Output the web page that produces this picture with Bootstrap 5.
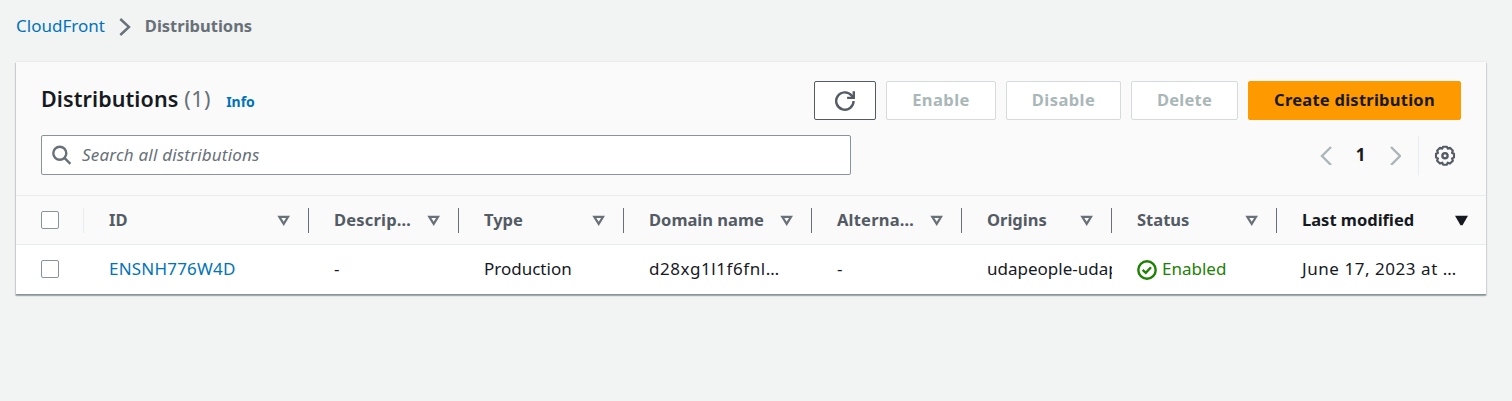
<!DOCTYPE html>
<html lang="en">
<head>
<meta charset="utf-8">
<meta name="viewport" content="width=device-width, initial-scale=1">
<title>CloudFront Distributions</title>
<link href="https://cdn.jsdelivr.net/npm/bootstrap@5.3.0/dist/css/bootstrap.min.css" rel="stylesheet">
<style>
body{background:#f2f3f3;color:#16191f;font-family:"Noto Sans","Open Sans",sans-serif;font-size:17px;line-height:24px;min-height:401px}
a{color:#0073bb;text-decoration:none}
svg{display:block;flex:none}
.crumbs{height:62px;padding:14px 16px 0}
.crumbs svg{margin:4px 13px 0}
.crumbs b,.btn,th{font-size:16.5px}
.crumbs b{color:#687078}
.panel{width:1470px;margin-left:16px;background:#fff;border-bottom:1px solid #879596;box-shadow:0 1px 1px 0 rgba(0,28,36,.1),1px 1px 1px 0 rgba(0,28,36,.12),-1px 1px 1px 0 rgba(0,28,36,.15),0 -1px 0 #eaeded}
.panel-top{height:134px;background:#fafafa;border-bottom:1px solid #eaeded;padding:19px 25px 0}
h2{font-size:21.5px;line-height:36px;font-weight:600;color:#16191f;letter-spacing:.1px}
.count{color:#687078;font-weight:400;letter-spacing:.6px}
.info{font-size:14px;font-weight:700;margin-left:15px;padding-top:9px}
.actions{gap:10px}
.btn{--bs-btn-border-radius:2px;--bs-btn-padding-y:0;--bs-btn-padding-x:0;--bs-btn-disabled-opacity:1;--bs-btn-bg:#fff;--bs-btn-disabled-bg:#fff;--bs-btn-disabled-color:#aab7b8;--bs-btn-disabled-border-color:#d5dbdb;height:39px;line-height:36px;padding-bottom:1px;font-weight:700;white-space:nowrap;letter-spacing:.25px}
.btn-reload{width:62px;--bs-btn-border-color:#545b64;color:#545b64;padding:0 20px}
.btn-enable{width:110px;letter-spacing:.45px}.btn-disable{width:115px;letter-spacing:.45px}.btn-delete{width:107px}
.btn-create{width:213px;--bs-btn-bg:#ff9900;--bs-btn-border-color:#ff9900;--bs-btn-color:#16191f}
.tools{margin-top:15px}
.filter{width:810px;height:40px;background:#fff;border:1px solid #879596;border-radius:2px;padding-left:10px;gap:10px;color:#687078;font-style:italic;letter-spacing:.2px}
.page-no{width:57px}
.rule{width:1px;height:39px;background:#eaeded;margin:0 16px 0 17px}
.gear{margin-right:5px;margin-left:-1px}
table{table-layout:fixed;width:1470px;border-collapse:separate;border-spacing:0}
th,td{height:49px;padding:0 0 0 25px;overflow:hidden;white-space:nowrap;vertical-align:middle}
td{padding-bottom:1px}
th{background:#fafafa;border-bottom:1px solid #eaeded;color:#545b64}
th .head{height:25px;border-right:1px solid #687078;padding-right:18px}
th:first-child .head{border-color:#eaeded}
th:last-child .head{border:0}
.tick{width:18px;height:18px;border:1px solid #879596;border-radius:2px;background:#fff}
.sorted{color:#16191f}
.ok{color:#1d8102;gap:5px}
.ok svg{margin-top:1px}
.track-1{letter-spacing:.2px}
.track-2{letter-spacing:.55px}
</style>
</head>
<body>
<nav class="crumbs d-flex align-items-start" aria-label="breadcrumb">
  <a href="#">CloudFront</a>
  <svg width="14" height="18" viewBox="0 0 14 18" fill="none" stroke="#687078" stroke-width="2.4"><path d="M2.3 1 11 9 2.3 17"/></svg>
  <b>Distributions</b>
</nav>
<main class="panel">
  <div class="panel-top">
    <div class="d-flex">
      <h2 class="mb-0">Distributions <span class="count">(1)</span></h2>
      <a class="info" href="#">Info</a>
      <div class="actions d-flex ms-auto">
        <button class="btn btn-reload" aria-label="Refresh"><svg width="20" height="20" viewBox="0 0 20 20" fill="none" stroke="currentColor" stroke-width="2.4"><path d="M18.6 10a8.7 8.7 0 1 1-2-5.5l2 2.3M18.8.2v6.7h-6.7"/></svg></button>
        <button class="btn btn-enable" disabled>Enable</button>
        <button class="btn btn-disable" disabled>Disable</button>
        <button class="btn btn-delete" disabled>Delete</button>
        <button class="btn btn-create">Create distribution</button>
      </div>
    </div>
    <div class="tools d-flex align-items-center">
      <div class="filter d-flex align-items-center">
        <svg width="20" height="20" viewBox="0 0 20 20" fill="none" stroke="#687078" stroke-width="2.4"><circle cx="7.8" cy="8.3" r="6.5"/><path d="m12.4 12.9 6 6"/></svg>
        <span>Search all distributions</span>
      </div>
      <div class="d-flex align-items-center ms-auto">
        <svg width="12" height="20" viewBox="0 0 12 20" fill="none" stroke="#aab7b8" stroke-width="2.4"><path d="m11 2-9 9 9 9"/></svg>
        <b class="page-no text-center">1</b>
        <svg width="12" height="20" viewBox="0 0 12 20" fill="none" stroke="#aab7b8" stroke-width="2.4"><path d="m2 2 9 9-9 9"/></svg>
        <div class="rule"></div>
        <svg class="gear" width="22" height="22" viewBox="-11 -11.7 22 22" fill="none" stroke="#545b64"><path stroke-width="2.1" stroke-linejoin="round" d="M-1.9-9h3.8l.8 2 2.3-.9 2.9 2.9-.9 2.3 2 .8v3.8l-2 .8.9 2.3L5 7.9 2.7 7l-.8 2h-3.8l-.8-2-2.3.9L-7.9 5-7 2.7l-2-.8v-3.8l2-.8L-7.9-5-5-7.9l2.3.9z"/><circle r="2.6" stroke-width="2.4"/></svg>
      </div>
    </div>
  </div>
  <table>
    <colgroup><col style="width:68px"><col style="width:225px"><col style="width:150px"><col style="width:165px"><col style="width:188px"><col style="width:150px"><col style="width:150px"><col style="width:165px"><col style="width:209px"></colgroup>
    <thead><tr>
      <th><div class="head d-flex align-items-center"><div class="tick"></div></div></th>
      <th><div class="head d-flex align-items-center justify-content-between"><span>ID</span><svg width="13" height="11" viewBox="0 0 13 11" fill="none" stroke="#687078" stroke-width="2.2"><path d="M2.3 1.8h8.8L6.7 8.9z"/></svg></div></th>
      <th><div class="head d-flex align-items-center justify-content-between"><span class="track-1">Descrip…</span><svg width="13" height="11" viewBox="0 0 13 11" fill="none" stroke="#687078" stroke-width="2.2"><path d="M2.3 1.8h8.8L6.7 8.9z"/></svg></div></th>
      <th><div class="head d-flex align-items-center justify-content-between"><span>Type</span><svg width="13" height="11" viewBox="0 0 13 11" fill="none" stroke="#687078" stroke-width="2.2"><path d="M2.3 1.8h8.8L6.7 8.9z"/></svg></div></th>
      <th><div class="head d-flex align-items-center justify-content-between"><span>Domain name</span><svg width="13" height="11" viewBox="0 0 13 11" fill="none" stroke="#687078" stroke-width="2.2"><path d="M2.3 1.8h8.8L6.7 8.9z"/></svg></div></th>
      <th><div class="head d-flex align-items-center justify-content-between"><span class="track-1">Alterna…</span><svg width="13" height="11" viewBox="0 0 13 11" fill="none" stroke="#687078" stroke-width="2.2"><path d="M2.3 1.8h8.8L6.7 8.9z"/></svg></div></th>
      <th><div class="head d-flex align-items-center justify-content-between"><span>Origins</span><svg width="13" height="11" viewBox="0 0 13 11" fill="none" stroke="#687078" stroke-width="2.2"><path d="M2.3 1.8h8.8L6.7 8.9z"/></svg></div></th>
      <th><div class="head d-flex align-items-center justify-content-between"><span>Status</span><svg width="13" height="11" viewBox="0 0 13 11" fill="none" stroke="#687078" stroke-width="2.2"><path d="M2.3 1.8h8.8L6.7 8.9z"/></svg></div></th>
      <th class="sorted"><div class="head d-flex align-items-center justify-content-between"><span>Last modified</span><svg width="13" height="11" viewBox="0 0 13 11" fill="#16191f"><path d="M0 .7h13L7.5 10.2h-2z"/></svg></div></th>
    </tr></thead>
    <tbody><tr>
      <td><div class="tick"></div></td>
      <td><a class="track-1" href="#">ENSNH776W4D</a></td>
      <td>-</td>
      <td>Production</td>
      <td class="track-2">d28xg1l1f6fnl…</td>
      <td>-</td>
      <td>udapeople-udapeople</td>
      <td><div class="ok d-flex align-items-center"><svg width="20" height="20" viewBox="0 0 20 20" fill="none" stroke="currentColor" stroke-width="2.4"><circle cx="10" cy="10" r="8.7"/><path d="m5.6 9.8 3.2 3 5.2-5.5"/></svg><span>Enabled</span></div></td>
      <td class="track-2">June 17, 2023 at …</td>
    </tr></tbody>
  </table>
</main>
<script src="https://cdn.jsdelivr.net/npm/bootstrap@5.3.0/dist/js/bootstrap.bundle.min.js"></script>
</body>
</html>
